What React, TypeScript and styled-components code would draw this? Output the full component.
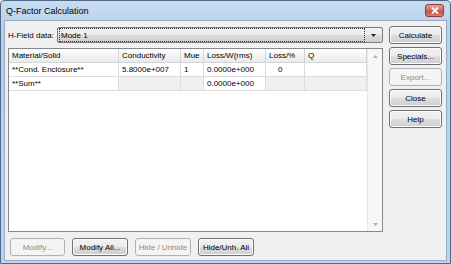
import styled, { createGlobalStyle } from 'styled-components'

const Global = createGlobalStyle`
  html, body { margin: 0; padding: 0; background: #ffffff; }
  body { font-family: 'Liberation Sans', Arial, sans-serif; font-size: 8px; color: #000; }
`

const Window = styled.div`
  width: 451px;
  height: 264px;
  box-sizing: border-box;
  border: 1px solid #4e6a86;
  border-radius: 4px 4px 0 0;
  background: linear-gradient(#c9dbf0, #b8cfe9 30px, #bdd3ec);
  display: flex;
  flex-direction: column;
  overflow: hidden;
`

const TitleBar = styled.div`
  height: 19px;
  display: flex;
  align-items: center;
  padding: 0 6px 0 5px;
  flex-shrink: 0;
`

const Title = styled.div`
  flex: 1;
  font-size: 9px;
  color: #000;
  padding-top: 1px;
`

const CloseButton = styled.div`
  width: 17px;
  height: 11px;
  margin-top: -1px;
  border: 1px solid #8b3c38;
  border-radius: 3px;
  background: linear-gradient(#e3a198, #cf6a5e 50%, #c44a3c 51%, #d6806f);
  display: flex;
  align-items: center;
  justify-content: center;
`

const Client = styled.div`
  flex: 1;
  margin: 0 3px 3px 3px;
  border: 1px solid #97acc4;
  background: #f0f0f0;
  display: flex;
  padding: 5px 4px 4px 3px;
  gap: 6px;
`

const LeftPane = styled.div`
  width: 375px;
  display: flex;
  flex-direction: column;
`

const FieldRow = styled.div`
  display: flex;
  align-items: center;
  height: 16px;
  margin-top: 1px;
  gap: 4px;
`

const Label = styled.span`
  width: 45px;
  white-space: nowrap;
`

const Combo = styled.div`
  flex: 1;
  height: 16px;
  box-sizing: border-box;
  border: 1px solid #7a7a7a;
  border-radius: 2px;
  background: linear-gradient(#f2f2f2, #ebebeb 50%, #dddddd 51%, #cfcfcf);
  display: flex;
  align-items: center;
  padding: 1px;
`

const ComboValue = styled.div`
  flex: 1;
  height: 12px;
  border: 1px dotted #333;
  display: flex;
  align-items: center;
  padding-left: 1px;
`

const ComboArrow = styled.div`
  width: 16px;
  display: flex;
  justify-content: center;
  align-items: center;
`

const TableBox = styled.div`
  margin-top: 5px;
  height: 184px;
  box-sizing: border-box;
  border: 1px solid #828790;
  background: #ffffff;
  display: flex;
`

const Grid = styled.div`
  flex: 1;
  display: grid;
  grid-template-columns: 110px 62px 23px 62px 39px 1fr;
  grid-auto-rows: 14px;
  align-content: start;
`

const HeadCell = styled.div`
  background: linear-gradient(#ffffff, #f4f4f4 50%, #eaeaea);
  border-right: 1px solid #d5d5d5;
  border-bottom: 1px solid #d5d5d5;
  display: flex;
  align-items: center;
  padding-left: 3px;
  white-space: nowrap;
`

const Cell = styled.div<{ $gray?: boolean; $pad?: number }>`
  background: ${p => (p.$gray ? '#f0f0f0' : '#ffffff')};
  border-right: 1px solid #dcdcdc;
  border-bottom: 1px solid #dcdcdc;
  display: flex;
  align-items: center;
  padding-left: ${p => p.$pad ?? 3}px;
  white-space: nowrap;
`

const ScrollBar = styled.div`
  width: 14px;
  border-left: 1px solid #e6e6e6;
  background: #f6f6f6;
  display: flex;
  flex-direction: column;
  justify-content: space-between;
`

const ScrollArrow = styled.div`
  height: 14px;
  display: flex;
  align-items: center;
  justify-content: center;
`

const BottomRow = styled.div`
  display: flex;
  gap: 7px;
  margin-top: 6px;
  padding-left: 2px;
`

const RightPane = styled.div`
  display: flex;
  flex-direction: column;
  gap: 3px;
`

const Button = styled.button<{ $w?: number }>`
  width: ${p => p.$w ?? 53}px;
  height: 18px;
  padding: 0;
  font-family: 'Liberation Sans', Arial, sans-serif;
  font-size: 8px;
  font-weight: 400;
  color: #000;
  border: 1px solid #707070;
  border-radius: 3px;
  background: linear-gradient(#f2f2f2, #ebebeb 50%, #dddddd 51%, #cfcfcf);
  box-shadow: inset 0 0 0 1px #fcfcfc;
  white-space: nowrap;
  &:disabled {
    color: #8a8a8a;
    border-color: #adb2b5;
    background: #f4f4f4;
    box-shadow: none;
  }
`

const Triangle = ({ up, color }: { up?: boolean; color: string }) => (
  <svg width="5" height="3" viewBox="0 0 5 3">
    <path d={up ? 'M0 3 L2.5 0 L5 3 Z' : 'M0 0 L5 0 L2.5 3 Z'} fill={color} />
  </svg>
)

export default function App() {
  return (
    <>
      <Global />
      <Window>
        <TitleBar>
          <Title>Q-Factor Calculation</Title>
          <CloseButton>
            <svg width="8" height="7" viewBox="0 0 8 7">
              <path d="M1 0.5 L7 6.5 M7 0.5 L1 6.5" stroke="#ffffff" strokeWidth="1.8" />
            </svg>
          </CloseButton>
        </TitleBar>
        <Client>
          <LeftPane>
            <FieldRow>
              <Label>H-Field data:</Label>
              <Combo>
                <ComboValue>Mode 1</ComboValue>
                <ComboArrow>
                  <Triangle color="#222" />
                </ComboArrow>
              </Combo>
            </FieldRow>
            <TableBox>
              <Grid>
                <HeadCell>Material/Solid</HeadCell>
                <HeadCell>Conductivity</HeadCell>
                <HeadCell>Mue</HeadCell>
                <HeadCell>Loss/W(rms)</HeadCell>
                <HeadCell>Loss/%</HeadCell>
                <HeadCell>Q</HeadCell>

                <Cell>**Cond. Enclosure**</Cell>
                <Cell>5.8000e+007</Cell>
                <Cell>1</Cell>
                <Cell>0.0000e+000</Cell>
                <Cell $pad={12}>0</Cell>
                <Cell></Cell>

                <Cell>**Sum**</Cell>
                <Cell $gray></Cell>
                <Cell $gray></Cell>
                <Cell>0.0000e+000</Cell>
                <Cell $gray></Cell>
                <Cell $gray></Cell>
              </Grid>
              <ScrollBar>
                <ScrollArrow>
                  <Triangle up color="#b0b0b0" />
                </ScrollArrow>
                <ScrollArrow>
                  <Triangle color="#b0b0b0" />
                </ScrollArrow>
              </ScrollBar>
            </TableBox>
            <BottomRow>
              <Button $w={55} disabled>Modify...</Button>
              <Button $w={56}>Modify All...</Button>
              <Button $w={56} disabled>Hide / Unhide</Button>
              <Button $w={56}>Hide/Unh. All</Button>
            </BottomRow>
          </LeftPane>
          <RightPane>
            <Button>Calculate</Button>
            <Button>Specials...</Button>
            <Button disabled>Export...</Button>
            <Button>Close</Button>
            <Button>Help</Button>
          </RightPane>
        </Client>
      </Window>
    </>
  )
}
